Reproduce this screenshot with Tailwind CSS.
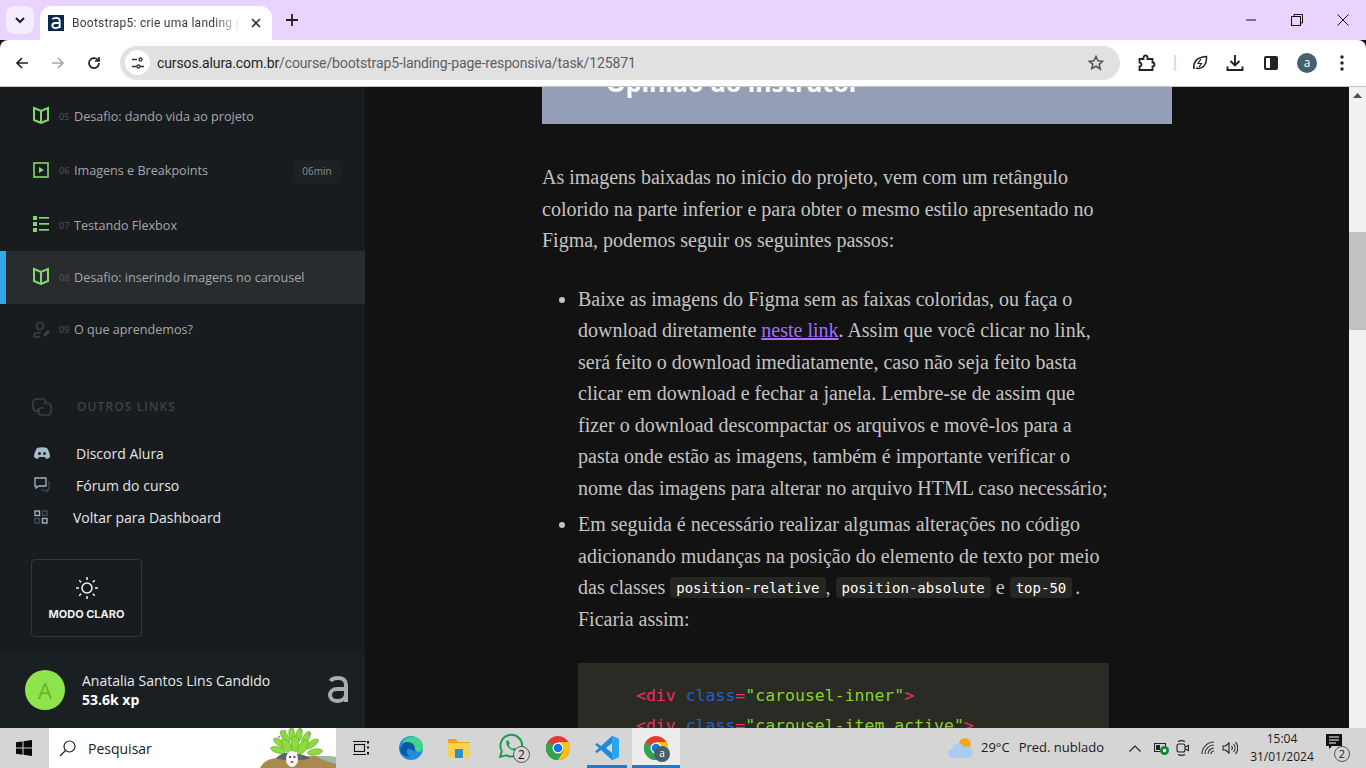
<!DOCTYPE html>
<html lang="pt-BR">
<head>
  <meta charset="UTF-8" />
  <title>Bootstrap5: crie uma landing page responsiva</title>
  <script src="https://cdn.jsdelivr.net/npm/@tailwindcss/browser@4"></script>
</head>
<body class="w-[1366px] h-[768px] overflow-hidden flex flex-col [font-family:'Open_Sans',sans-serif] bg-[#121212]">

  <!-- tab strip -->
  <div class="h-[40px] bg-[#e8d4fd] flex items-end shrink-0">
    <div class="ml-[6px] mb-[6px] w-[28px] h-[28px] bg-[#f5ecfe] rounded-lg flex items-center justify-center">
      <svg width="12" height="12" viewBox="0 0 12 12" fill="none" stroke="#1f1f1f" stroke-width="2"><path d="M2 4l4 4 4-4"/></svg>
    </div>
    <div class="ml-[6px] w-[232px] h-[34px] bg-white rounded-t-xl flex items-center pl-[8px]">
      <div class="w-[16px] h-[16px] bg-[#0b2a4a] flex items-center justify-center">
        <svg width="10" height="12" viewBox="0 0 20 26" fill="none" stroke="#fff" stroke-width="4"><path d="M2.500 5C4 2.500 7 2 10 2c5 0 8 2.500 8 7v15M18 13H9c-4 0-7 2.500-7 5.500S5 24 9 24c4 0 9-2 9-6"/></svg>
      </div>
      <div class="ml-[8px] w-[168px] overflow-hidden whitespace-nowrap text-[12px] tracking-[0.25px] text-[#3c3c3c] [font-family:'Roboto',sans-serif] [mask-image:linear-gradient(90deg,#000_85%,transparent)]">Bootstrap5: crie uma landing page responsiva</div>
      <svg class="ml-[10px]" width="12" height="12" viewBox="0 0 12 12" stroke="#333" stroke-width="1.6"><path d="M2 2l8 8M10 2l-8 8"/></svg>
    </div>
    <svg class="ml-[13px] mb-[13px]" width="14" height="14" viewBox="0 0 14 14" stroke="#222" stroke-width="1.8"><path d="M7 1v12M1 7h12"/></svg>
    <div class="ml-auto flex items-center h-[40px]">
      <svg width="12" height="12" viewBox="0 0 12 12" stroke="#111" stroke-width="1"><path d="M1 6h10"/></svg>
      <svg class="ml-[34px]" width="12" height="12" viewBox="0 0 12 12" fill="none" stroke="#111" stroke-width="1"><rect x=".5" y="2.5" width="9" height="9"/><path d="M3 2.500V.5h8.500V9h-2"/></svg>
      <svg class="ml-[34px] mr-[17px]" width="12" height="12" viewBox="0 0 12 12" stroke="#111" stroke-width="1"><path d="M.5.5l11 11M11.500.5l-11 11"/></svg>
    </div>
  </div>

  <!-- toolbar -->
  <div class="h-[47px] bg-white border-b border-[#c4c4c4] rounded-t-lg flex items-center shrink-0 pb-[1px]">
    <svg class="ml-[15px]" width="14" height="14" viewBox="0 0 14 14" fill="none" stroke="#222" stroke-width="1.7"><path d="M13 7H2M7 2L2 7l5 5"/></svg>
    <svg class="ml-[22px]" width="14" height="14" viewBox="0 0 14 14" fill="none" stroke="#a8a8a8" stroke-width="1.7"><path d="M1 7h11M7 2l5 5-5 5"/></svg>
    <svg class="ml-[22px]" width="14" height="14" viewBox="0 0 14 14" fill="none" stroke="#222" stroke-width="1.7"><path d="M12 7a5 5 0 1 1-1.500-3.500L12 5M12 1v4H8"/></svg>
    <div class="ml-[19px] w-[1000px] h-[34px] bg-[#e1e1e1] rounded-full flex items-center pl-[5px] pr-[16px]">
      <div class="w-[25px] h-[25px] bg-white rounded-full flex items-center justify-center">
        <svg width="14" height="12" viewBox="0 0 14 12" fill="none" stroke="#333" stroke-width="1.300"><path d="M1 2.500h5M9 9.500h4M6 9.500H1"/><circle cx="9.500" cy="2.500" r="1.500"/><circle cx="7.500" cy="9.500" r="1.500"/></svg>
      </div>
      <div class="ml-[7px] pt-[1px] text-[14px] text-[#5f5f5f] [font-family:'Roboto',sans-serif] tracking-[-0.12px]"><span class="text-[#1f1f1f]">cursos.alura.com.br</span>/course/bootstrap5-landing-page-responsiva/task/125871</div>
      <svg class="ml-auto" width="16" height="16" viewBox="0 0 16 16" fill="none" stroke="#555" stroke-width="1.600"><path d="M8 1.500l2 4.300 4.600.5-3.400 3.100 1 4.600L8 11.300l-4.200 2.400 1-4.600L1.400 6.300 6 5.800z"/></svg>
    </div>
    <svg class="ml-[18px]" width="18" height="18" viewBox="0 0 18 18" fill="none" stroke="#222" stroke-width="1.800"><path d="M1.500 5h4V3.500a2 2 0 0 1 4 0V5h5v3.500a2 2 0 0 1 0 4V16h-13v-3.500a2 2 0 0 0 0-4z"/></svg>
    <div class="ml-[18px] w-[2px] h-[16px] bg-[#e8d4fd]"></div>
    <svg class="ml-[16px]" width="16" height="16" viewBox="0 0 16 16" fill="none" stroke="#222" stroke-width="1.500"><path d="M2 14c-1-5 1-12 12.500-12.500C15 9 11 15 4 13"/><path d="M9 4L6 8.500h3.500L7 12" stroke-width="1.200"/></svg>
    <svg class="ml-[18px]" width="18" height="18" viewBox="0 0 18 18" fill="none" stroke="#222" stroke-width="1.900"><path d="M9 1v10M4.500 7L9 11.500 13.500 7M1.500 12.500V16h15v-3.500"/></svg>
    <div class="ml-[20px] w-[14px] h-[14px] border-2 border-[#222] rounded-[2px] flex justify-end"><div class="w-[6px] bg-[#222]"></div></div>
    <div class="ml-[19px] w-[20px] h-[20px] rounded-full bg-[#45606f] text-white text-[12px] leading-[19px] text-center">a</div>
    <svg class="ml-[23px]" width="4" height="16" viewBox="0 0 4 16" fill="#222"><circle cx="2" cy="2" r="1.700"/><circle cx="2" cy="8" r="1.700"/><circle cx="2" cy="14" r="1.700"/></svg>
  </div>

  <!-- page -->
  <div class="flex h-[641px] shrink-0 overflow-hidden">
    <!-- sidebar -->
    <aside class="w-[365px] shrink-0 bg-[#181c1f] flex flex-col text-[12.600px]">
      <div class="h-[57px] flex items-center pl-[33px] pt-[3px] text-[#a5a7a9]">
        <svg class="mb-[5px]" width="16" height="18" viewBox="0 0 16 18" fill="none" stroke="#83d56f" stroke-width="2"><path d="M1 2l7 3 7-3v12l-7 3-7-3zM8 5v12"/></svg>
        <span class="ml-[10px] w-[15px] text-[9px] text-[#52565a]">05</span><span>Desafio: dando vida ao projeto</span>
      </div>
      <div class="h-[54px] flex items-center pl-[33px] text-[#a5a7a9]">
        <svg class="mb-[2px]" width="16" height="16" viewBox="0 0 16 16" fill="none" stroke="#83d56f" stroke-width="1.600"><rect x="1" y="1" width="14" height="14"/><path d="M6 5l5 3-5 3z" fill="#83d56f" stroke="none"/></svg>
        <span class="ml-[10px] w-[15px] text-[9px] text-[#52565a]">06</span><span>Imagens e Breakpoints</span>
        <span class="ml-auto mr-[24px] h-[23px] w-[48px] bg-[#1d2124] rounded text-[10px] leading-[23px] text-center text-[#8c8f91]">06min</span>
      </div>
      <div class="h-[53px] flex items-center pl-[33px] pt-[3px] text-[#a5a7a9]">
        <svg class="mb-[5px]" width="16" height="16" viewBox="0 0 16 16" fill="#83d56f"><rect y="0" width="4" height="4"/><rect y="6" width="4" height="4"/><rect y="12" width="4" height="4"/><rect x="6" y="1" width="10" height="1.700"/><rect x="6" y="7" width="10" height="1.700"/><rect x="6" y="13" width="10" height="1.700"/></svg>
        <span class="ml-[10px] w-[15px] text-[9px] text-[#52565a]">07</span><span>Testando Flexbox</span>
      </div>
      <div class="h-[53px] flex items-center pl-[27px] pt-[1px] text-[#a5a7a9] bg-[#292c2f] border-l-[6px] border-[#2ea9e9]">
        <svg class="mb-[5px]" width="16" height="18" viewBox="0 0 16 18" fill="none" stroke="#83d56f" stroke-width="2"><path d="M1 2l7 3 7-3v12l-7 3-7-3zM8 5v12"/></svg>
        <span class="ml-[10px] w-[15px] text-[9px] text-[#52565a]">08</span><span>Desafio: inserindo imagens no carousel</span>
      </div>
      <div class="h-[52px] flex items-center pl-[33px] text-[#a5a7a9]">
        <svg width="18" height="18" viewBox="0 0 18 18" fill="none" stroke="#3a4249" stroke-width="1.700"><circle cx="7" cy="5" r="3.500"/><path d="M1 16v-1.500c0-2 2-3 5-3h2M1 16h6"/><path d="M11 15l5-5" stroke-width="3"/></svg>
        <span class="ml-[8px] w-[15px] text-[9px] text-[#52565a]">09</span><span>O que aprendemos?</span>
      </div>

      <div class="mt-[40px] h-[22px] flex items-center pl-[31px]">
        <svg width="22" height="20" viewBox="0 0 22 20" fill="none" stroke="#3a4045" stroke-width="1.600"><path d="M9 14H5a4 4 0 0 1-3-3V5a4 4 0 0 1 3-3h7a4 4 0 0 1 3 3"/><path d="M13 6h4a4 4 0 0 1 3 3v6a4 4 0 0 1-3 3h-7a4 4 0 0 1-3-3v-1a3 3 0 0 1 3-3h3"/></svg>
        <span class="ml-[24px] text-[12px] font-semibold tracking-[1.100px] text-[#3d4246]">OUTROS LINKS</span>
      </div>
      <div class="mt-[19px] h-[32px] flex items-center pl-[34px] text-[#e4e5e6] text-[14px]">
        <svg width="16" height="12" viewBox="0 0 16 12" fill="#a5bdca"><path d="M3 1c3-1 7-1 10 0 2 3 3 6 3 9-1 1-3 2-4 2l-1-2H5l-1 2c-1 0-3-1-4-2 0-3 1-6 3-9z"/><circle cx="5.500" cy="6.500" r="1.500" fill="#181c1f"/><circle cx="10.500" cy="6.500" r="1.500" fill="#181c1f"/></svg>
        <span class="ml-[26px]">Discord Alura</span>
      </div>
      <div class="h-[32px] flex items-center pl-[34px] text-[#e4e5e6] text-[14px]">
        <svg width="16" height="16" viewBox="0 0 16 16" fill="none"><path d="M1 1h11v8H5l-3 2V9H1z" stroke="#9db3bf" stroke-width="1.300"/><path d="M14 5h1v8h-2v2l-3-2H7" stroke="#3d454b" stroke-width="1.300"/></svg>
        <span class="ml-[26px]">Fórum do curso</span>
      </div>
      <div class="h-[32px] flex items-center pl-[34px] text-[#e4e5e6] text-[14px]">
        <svg width="14" height="14" viewBox="0 0 14 14" fill="none" stroke-width="1.400"><rect x="1" y="1" width="4.500" height="4.500" stroke="#9db3bf"/><rect x="8.500" y="1" width="4.500" height="4.500" stroke="#454d52"/><rect x="1" y="8.500" width="4.500" height="4.500" stroke="#454d52"/><rect x="8.500" y="8.500" width="4.500" height="4.500" stroke="#9db3bf"/></svg>
        <span class="ml-[25px]">Voltar para Dashboard</span>
      </div>

      <div class="mt-[26px] ml-[31px] w-[111px] h-[78px] border border-[#33383c] rounded flex flex-col items-center">
        <svg class="mt-[16px]" width="24" height="24" viewBox="0 0 24 24" fill="none" stroke="#f1f1f1" stroke-width="1.500"><circle cx="12" cy="12" r="5"/><path d="M12 1v3M12 20v3M1 12h3M20 12h3M4.200 4.200l2 2M17.800 17.800l2 2M4.200 19.800l2-2M17.800 6.200l2-2"/></svg>
        <span class="mt-[6px] text-[11px] font-bold text-[#efefef] [font-family:'Inter',sans-serif]">MODO CLARO</span>
      </div>

      <div class="mt-[15px] flex-1 bg-[#1a1f22] flex items-center pl-[25px] pr-[17px]">
        <div class="w-[40px] h-[40px] rounded-full bg-[#8fe34d] text-[#65b32e] text-[22px] leading-[40px] text-center">A</div>
        <div class="ml-[17px]">
          <div class="text-[14px] leading-[19px] text-[#e8e9ea]">Anatalia Santos Lins Candido</div>
          <div class="text-[14px] leading-[19px] font-bold text-white">53.6k xp</div>
        </div>
        <svg class="ml-auto" width="20" height="28" viewBox="0 0 20 28" fill="none" stroke="#a9acae" stroke-width="4"><path d="M2.500 5C4 2.500 7 2 10 2c5 0 8 2.500 8 7v17M18 13H9c-4 0-7 2.500-7 6s3 6 7 6c4 0 9-2 9-7"/></svg>
      </div>
    </aside>

    <!-- lesson -->
    <main class="flex-1 bg-[#121212] overflow-hidden">
      <div class="ml-[177px] w-[630px]">
        <div class="h-[37px] bg-[#959eb7] overflow-hidden pl-[64px]">
          <div class="-mt-[20px] text-[25px] leading-[30px] font-bold text-white [font-family:'Noto_Sans',sans-serif]">Opinião do instrutor</div>
        </div>
        <div class="[font-family:'Liberation_Serif',serif] text-[20px] leading-[31.500px] text-[#c4c4c4] whitespace-nowrap">
          <p class="mt-[38px]">As imagens baixadas no início do projeto, vem com um retângulo<br>colorido na parte inferior e para obter o mesmo estilo apresentado no<br>Figma, podemos seguir os seguintes passos:</p>
          <ul class="mt-[27px] ml-[36px] list-disc">
            <li>Baixe as imagens do Figma sem as faixas coloridas, ou faça o<br>download diretamente <a class="underline text-[#a56eff]">neste link</a>. Assim que você clicar no link,<br>será feito o download imediatamente, caso não seja feito basta<br>clicar em download e fechar a janela. Lembre-se de assim que<br>fizer o download descompactar os arquivos e movê-los para a<br>pasta onde estão as imagens, também é importante verificar o<br>nome das imagens para alterar no arquivo HTML caso necessário;</li>
            <li class="mt-[5px]">Em seguida é necessário realizar algumas alterações no código<br>adicionando mudanças na posição do elemento de texto por meio<br>das classes <code class="[font-family:'DejaVu_Sans_Mono',monospace] text-[14px] leading-none [vertical-align:2px] text-white bg-[#262623] rounded px-[6px] py-[2.500px]">position-relative</code>, <code class="[font-family:'DejaVu_Sans_Mono',monospace] text-[14px] leading-none [vertical-align:2px] text-white bg-[#262623] rounded px-[6px] py-[2.500px]">position-absolute</code> e <code class="[font-family:'DejaVu_Sans_Mono',monospace] text-[14px] leading-none [vertical-align:2px] text-white bg-[#262623] rounded px-[6px] py-[2.500px]">top-50</code><span class="ml-[3px]">.</span><br>Ficaria assim:</li>
          </ul>
          <pre class="mt-[28px] ml-[36px] w-[531px] h-[80px] bg-[#2b2b26] pt-[18px] pl-[58px] [font-family:'DejaVu_Sans_Mono',monospace] text-[16.500px] leading-[30px]"><span class="text-[#f02d60]">&lt;div</span> <span class="text-[#1f62c9]">class</span><span class="text-[#f02d60]">=</span><span class="text-[#86d42a]">"carousel-inner"</span><span class="text-[#f02d60]">&gt;</span>
<span class="text-[#f02d60]">&lt;div</span> <span class="text-[#1f62c9]">class</span><span class="text-[#f02d60]">=</span><span class="text-[#86d42a]">"carousel-item active"</span><span class="text-[#f02d60]">&gt;</span></pre>
        </div>
      </div>
    </main>

    <!-- page scrollbar -->
    <div class="w-[17px] shrink-0 bg-[#f1f1f1] flex flex-col items-center">
      <svg class="mt-[6px]" width="9" height="5" viewBox="0 0 9 5" fill="#505050"><path d="M4.500 0L9 5H0z"/></svg>
      <div class="mt-[134px] w-full h-[98px] bg-[#c1c1c1]"></div>
    </div>
  </div>

  <!-- taskbar -->
  <div class="h-[40px] shrink-0 bg-[#d5d5d5] flex items-center text-[#1b1b1b] [font-family:'Open_Sans',sans-serif]">
    <svg class="ml-[16px]" width="16" height="16" viewBox="0 0 16 16" fill="#0a0a0a"><path d="M0 2.300l6.500-.9V7.500H0zM7.500 1.300L16 0v7.500H7.500zM0 8.500h6.500v6.200L0 13.700zM7.500 8.500H16V16l-8.500-1.200z"/></svg>
    <div class="ml-[17px] w-[287px] h-[40px] bg-white flex items-center overflow-hidden">
      <svg class="ml-[10px]" width="17" height="17" viewBox="0 0 17 17" fill="none" stroke="#222" stroke-width="1.200"><circle cx="10.500" cy="6.500" r="5.500"/><path d="M6.500 10.500L1 16"/></svg>
      <span class="ml-[12px] text-[14px]">Pesquisar</span>
      <!-- search box doodle -->
      <svg class="ml-auto" width="78" height="40" viewBox="0 0 78 40">
        <path d="M2 40c3-6 8-9 16-10l14-1 24-1c8 0 15 0 22 1v11z" fill="#a98a4e"/>
        <path d="M58 28c8 0 14 0 20 1v7c-7-2-14-4-20-8z" fill="#9db9a8"/>
        <g fill="#8edb3f" stroke="#5ea82c" stroke-width=".6">
          <ellipse cx="20" cy="22" rx="3" ry="7.500" transform="rotate(-75 20 22)"/>
          <ellipse cx="22" cy="15" rx="3" ry="7.500" transform="rotate(-55 22 15)"/>
          <ellipse cx="27" cy="9" rx="3" ry="7.500" transform="rotate(-30 27 9)"/>
          <ellipse cx="34" cy="7" rx="3" ry="7" transform="rotate(-10 34 7)"/>
          <ellipse cx="41" cy="7" rx="3" ry="7" transform="rotate(10 41 7)"/>
          <ellipse cx="48" cy="10" rx="3" ry="7.500" transform="rotate(30 48 10)"/>
          <ellipse cx="54" cy="16" rx="3" ry="7.500" transform="rotate(55 54 16)"/>
          <ellipse cx="57" cy="24" rx="3" ry="7.500" transform="rotate(80 57 24)"/>
          <ellipse cx="29" cy="18" rx="4" ry="8" transform="rotate(-35 29 18)"/>
          <ellipse cx="37" cy="16" rx="4" ry="8"/>
          <ellipse cx="45" cy="19" rx="4" ry="8" transform="rotate(35 45 19)"/>
        </g>
        <g fill="#e85aa0"><circle cx="27" cy="3" r="1"/><circle cx="35" cy="1.500" r="1"/><circle cx="43" cy="2" r="1"/><circle cx="21" cy="9" r="1"/><circle cx="51" cy="6" r="1"/></g>
        <path d="M18 30c5-5 10-6 14-5l1 7c-5 0-10 0-15-2zM52 30c-5-3-9-4-13-4l-1 6c5 0 10 0 14-2z" fill="#59636b"/>
        <ellipse cx="34" cy="31" rx="6" ry="8" fill="#f4f4f4"/>
        <circle cx="32" cy="29" r="1" fill="#223"/><circle cx="36.500" cy="29" r="1" fill="#223"/><ellipse cx="34" cy="34" rx="1.500" ry="1" fill="#c43a5a"/>
      </svg>
    </div>
    <svg class="ml-[17px]" width="16" height="16" viewBox="0 0 16 16" fill="none" stroke="#111" stroke-width="1.100"><rect x="1.500" y="4.500" width="10" height="7"/><path d="M0 1.500h13M0 14.500h13"/><path d="M15 1v2.500M15 6.500v2M15 12v2.500" stroke-width="2"/></svg>
    <!-- edge -->
    <svg class="ml-[30px]" width="24" height="24" viewBox="0 0 24 24"><circle cx="12" cy="12" r="12" fill="#1d8fd6"/><path d="M1 14C3 5 12 3 18 7c4 3 3 8-2 8-3 0-3-2-6-2-3 0-3 5 1 8-5 0-9-3-10-7z" fill="#0c59a4"/><path d="M3 7C8-3 24-1 24 11c0 6-8 6-8 2 0-4-3-7-7-7-3 0-5 0-6 1z" fill="#41d38f"/></svg>
    <!-- folder -->
    <svg class="ml-[25px]" width="22" height="20" viewBox="0 0 22 20"><path d="M0 1h8l2 3h12v3H0z" fill="#e8a91e"/><rect y="5" width="22" height="15" fill="#fbd24e"/><rect x="7" y="11" width="8" height="9" fill="#2e8ed8"/></svg>
    <!-- whatsapp -->
    <div class="ml-[28px] w-[32px] h-[30px] relative">
      <svg width="26" height="26" viewBox="0 0 24 24" fill="none" stroke="#1a9e4b" stroke-width="1.800"><path d="M2 22l1.500-5.500A10 10 0 1 1 7.500 20.500z"/><path d="M8 7c-1 2 0 5 2.500 7s5 3 6.500 1.500l-2-2-1.500 1c-1.500-.5-3-2-3.500-3.500l1-1.500-2-3z" fill="#1a9e4b" stroke="none"/></svg>
      <span class="absolute right-0 bottom-0 w-[17px] h-[17px] rounded-full border border-[#555] bg-[#d5d5d5] text-[12px] leading-[15px] text-center">2</span>
    </div>
    <!-- chrome -->
    <svg class="ml-[16px]" width="24" height="24" viewBox="0 0 24 24"><circle cx="12" cy="12" r="12" fill="#e33b2e"/><path d="M12 12L1.600 6A12 12 0 0 0 12 24l6-10z" fill="#2fa44f"/><path d="M12 6h10.400A12 12 0 0 1 12 24l6-10z" fill="#fbc116"/><circle cx="12" cy="12" r="5.500" fill="#fff"/><circle cx="12" cy="12" r="4.300" fill="#1a73e8"/></svg>
    <!-- vscode -->
    <div class="ml-[17px] w-[40px] h-[40px] border-b-[3px] border-[#1f7ad2] flex items-center justify-center pt-[2px]">
      <svg width="26" height="26" viewBox="0 0 26 26"><path d="M18 1l7 3v18l-7 3L7 15l-4 3-2-1.500L5 13 1 9.500 3 8l4 3zM18 8l-6 5 6 5z" fill="#1f8ad8"/><path d="M18 1l7 3v18l-7 3z" fill="#2aa5ee"/></svg>
    </div>
    <!-- chrome, active window -->
    <div class="ml-[5px] w-[48px] h-[40px] bg-[#ececec] border-b-[3px] border-[#1f7ad2] flex items-center justify-center pt-[2px] relative">
      <svg width="24" height="24" viewBox="0 0 24 24"><circle cx="12" cy="12" r="12" fill="#e33b2e"/><path d="M12 12L1.600 6A12 12 0 0 0 12 24l6-10z" fill="#2fa44f"/><path d="M12 6h10.400A12 12 0 0 1 12 24l6-10z" fill="#fbc116"/><circle cx="12" cy="12" r="5.500" fill="#fff"/><circle cx="12" cy="12" r="4.300" fill="#1a73e8"/></svg>
      <span class="absolute left-[22px] top-[18px] w-[16px] h-[16px] rounded-full bg-[#45606f] text-white text-[10px] leading-[15px] text-center">a</span>
    </div>
    <!-- tray -->
    <svg class="ml-[268px]" width="26" height="22" viewBox="0 0 26 22"><circle cx="17" cy="7" r="6" fill="#f5a623"/><path d="M5 21a4.500 4.500 0 0 1-1-9 6.500 6.500 0 0 1 12-2 5.500 5.500 0 0 1 5 11z" fill="#a9cdf0"/></svg>
    <span class="ml-[7px] text-[13px]">29°C</span>
    <span class="ml-[9px] text-[13px]">Pred. nublado</span>
    <svg class="ml-[25px]" width="12" height="7" viewBox="0 0 12 7" fill="none" stroke="#222" stroke-width="1.200"><path d="M.5 6.500L6 1l5.500 5.500"/></svg>
    <svg class="ml-[13px]" width="15" height="13" viewBox="0 0 15 13"><rect x=".5" y="1.500" width="11" height="8" fill="none" stroke="#222"/><rect x="2" y="3" width="4" height="5" fill="#222"/><circle cx="10.500" cy="8.500" r="4.500" fill="#0c8a35"/><circle cx="10.500" cy="8.500" r="1.700" fill="#fff"/></svg>
    <svg class="ml-[7px]" width="14" height="18" viewBox="0 0 14 18" fill="none" stroke="#222" stroke-width="1.100"><path d="M2 2.500c2-1 5-1 7 0M2 15.500c2 1 5 1 7 0"/><rect x="1" y="5" width="8" height="8" rx="2"/><path d="M9.500 8l3-1.500v5l-3-1.500"/></svg>
    <svg class="ml-[11px]" width="15" height="14" viewBox="0 0 15 14" fill="none" stroke="#333" stroke-width="1.100"><path d="M1 13A12 12 0 0 1 13 1M4 13a9 9 0 0 1 9-9M7 13a6 6 0 0 1 6-6M10 13a3 3 0 0 1 3-3"/></svg>
    <svg class="ml-[6px]" width="16" height="14" viewBox="0 0 16 14" fill="none" stroke="#222" stroke-width="1.100"><path d="M1 5v4h2.500L7 12V2L3.500 5zM9.500 5a3 3 0 0 1 0 4M11.500 3a6 6 0 0 1 0 8M13.500 1a9 9 0 0 1 0 12"/></svg>
    <div class="ml-[9px] w-[70px] text-center text-[12px] leading-[18px]">
      <div>15:04</div>
      <div>31/01/2024</div>
    </div>
    <div class="ml-[9px] w-[28px] h-[28px] relative">
      <svg width="16" height="16" viewBox="0 0 16 16"><path d="M0 0h16v12H6l-3 3v-3H0z" fill="#111"/><path d="M3 3h10M3 6h10M3 9h7" stroke="#fff"/></svg>
      <span class="absolute right-[4px] bottom-0 w-[16px] h-[16px] rounded-full border border-[#555] bg-[#d5d5d5] text-[11px] leading-[14px] text-center">2</span>
    </div>
  </div>
</body>
</html>
